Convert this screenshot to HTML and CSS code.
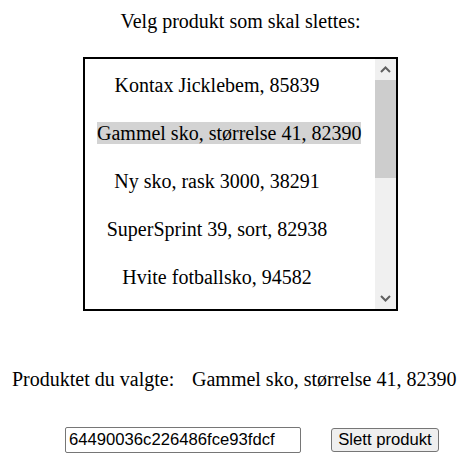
FILE: index.html
```html
<!DOCTYPE html>
<html lang="no">
<head>
<meta charset="utf-8">
<title>Slett produkt</title>
<link rel="stylesheet" href="styles.css">
</head>
<body>
<main class="page">
  <h1 class="title">Velg produkt som skal slettes:</h1>
  <div class="listbox">
    <ul class="items">
      <li class="item"><span>Kontax Jicklebem, 85839</span></li>
      <li class="item"><span class="selected">Gammel sko, størrelse 41, 82390</span></li>
      <li class="item"><span>Ny sko, rask 3000, 38291</span></li>
      <li class="item"><span>SuperSprint 39, sort, 82938</span></li>
      <li class="item"><span>Hvite fotballsko, 94582</span></li>
    </ul>
    <div class="scrollbar">
      <div class="sb-btn">
        <svg width="11" height="7" viewBox="0 0 11 7"><path d="M1 6 L5.5 1.5 L10 6" fill="none" stroke="#606060" stroke-width="2"/></svg>
      </div>
      <div class="sb-track">
        <div class="sb-thumb"></div>
      </div>
      <div class="sb-btn">
        <svg width="11" height="7" viewBox="0 0 11 7"><path d="M1 1 L5.5 5.5 L10 1" fill="none" stroke="#606060" stroke-width="2"/></svg>
      </div>
    </div>
  </div>
  <div class="result">
    <span class="result-label">Produktet du valgte:</span>
    <span class="result-value">Gammel sko, størrelse 41, 82390</span>
  </div>
  <div class="actions">
    <input class="id-input" type="text" value="64490036c226486fce93fdcf">
    <button class="delete-btn" type="button">Slett produkt</button>
  </div>
</main>
</body>
</html>
```
FILE: styles.css
```css
html, body {
  margin: 0;
  padding: 0;
  background: #ffffff;
}
body {
  font-family: "Liberation Serif", "Times New Roman", serif;
  font-size: 20px;
  line-height: 23px;
  color: #000000;
}
.page {
  width: 474px;
  display: flex;
  flex-direction: column;
}
.title {
  margin: 10px 0 0 0;
  padding-left: 7px;
  font-size: 20px;
  font-weight: normal;
  line-height: 23px;
  text-align: center;
}
.listbox {
  margin: 24px 0 0 83px;
  width: 311px;
  height: 250px;
  border: 2px solid #000000;
  display: flex;
  overflow: hidden;
}
.items {
  list-style: none;
  margin: 0;
  padding: 2px 0 0 12px;
  flex: 1;
  display: flex;
  flex-direction: column;
}
.item {
  width: 240px;
  padding: 12.5px 0;
  text-align: center;
  white-space: nowrap;
  line-height: 23px;
}
.selected {
  background: #d3d3d3;
}
.scrollbar {
  width: 21px;
  background: #f0f0f0;
  display: flex;
  flex-direction: column;
}
.sb-btn {
  height: 21px;
  display: flex;
  align-items: center;
  justify-content: center;
  flex: none;
}
.sb-track {
  flex: 1;
}
.sb-thumb {
  height: 98px;
  background: #cdcdcd;
}
.result {
  margin: 57px 0 0 12px;
  display: grid;
  grid-template-columns: 180px auto;
  white-space: nowrap;
}
.actions {
  margin: 36px 0 0 65px;
  display: flex;
  align-items: center;
  gap: 30px;
}
.id-input {
  box-sizing: border-box;
  width: 236px;
  height: 26px;
  margin: 0;
  padding: 0 3px;
  border: 1px solid #767676;
  border-radius: 2px;
  font-family: "Liberation Sans", Arial, sans-serif;
  font-size: 16.67px;
  color: #000000;
  background: #ffffff;
}
.delete-btn {
  box-sizing: border-box;
  width: 108px;
  height: 24px;
  margin: 0;
  padding: 0;
  border: 1px solid #767676;
  border-radius: 3px;
  background: #efefef;
  font-family: "Liberation Sans", Arial, sans-serif;
  font-size: 16.67px;
  color: #000000;
}
```
